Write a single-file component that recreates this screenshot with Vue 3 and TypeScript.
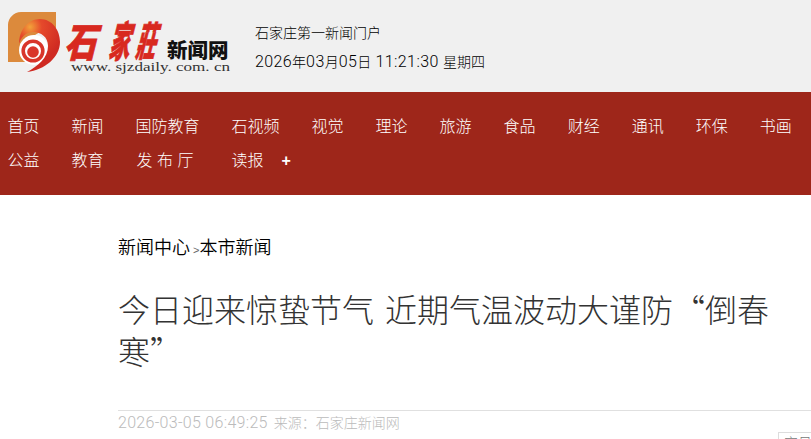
<script setup lang="ts">
const navItems = [
  '首页', '新闻', '国防教育', '石视频', '视觉', '理论', '旅游', '食品', '财经', '通讯', '环保', '书画',
  '公益', '教育', '发 布 厅', '读报',
]
</script>

<template>
  <div class="page">
    <header class="top">
      <svg class="logo" width="232" height="74" viewBox="0 0 232 74">
        <defs>
          <radialGradient id="swirl" gradientUnits="userSpaceOnUse" cx="30" cy="27" r="34">
            <stop offset="0" stop-color="#f2a33a" />
            <stop offset="0.35" stop-color="#e5492b" />
            <stop offset="1" stop-color="#cf2a22" />
          </radialGradient>
        </defs>
        <path d="M21 12 H56 V28 L40 32 L20 44 L28 62 H8 V25 C8 18 14 12 21 12 Z" fill="#dc8a3c" />
        <circle cx="34" cy="50" r="15" fill="#fff" />
        <path d="M19 44 C19 30 28 19 40 19 C52 19 60 30 60 42 C60 57 45 70 27 72 C38 66 48 58 48 46 C48 37 41 32 33 32 C26 32 21 37 19 44 Z" fill="url(#swirl)" />
        <circle cx="33" cy="51" r="9.8" fill="none" stroke="#d9352a" stroke-width="3.6" />
        <circle cx="33" cy="52" r="5.8" fill="#d9352a" />
        <g class="logo-red">
          <text transform="translate(64 57) skewX(-14) scale(0.8 1)" font-size="40">石</text>
          <text transform="translate(108 57) skewX(-14) scale(0.52 1.05)" font-size="40">家</text>
          <text transform="translate(135 56) skewX(-14) scale(0.5 1)" font-size="40">莊</text>
        </g>
        <text class="logo-black" x="167" y="58" font-size="20.5">新闻网</text>
        <text class="logo-url" x="71" y="71" font-size="12" textLength="159" lengthAdjust="spacingAndGlyphs">www. sjzdaily. com. cn</text>
      </svg>
      <div class="slogan">
        <p>石家庄第一新闻门户</p>
        <p><span class="num">2026</span>年<span class="num">03</span>月<span class="num">05</span>日<span class="num"> 11:21:30 </span>星期四</p>
      </div>
    </header>

    <nav class="nav">
      <a v-for="item in navItems" :key="item" :class="{ wide: item === '发 布 厅' }">{{ item }}</a>
      <span class="more">+</span>
    </nav>

    <main class="article">
      <div class="crumb">新闻中心<span class="sep"> &gt;</span>本市新闻</div>
      <h1>今日迎来惊蛰节气 近期气温波动大谨防“倒春寒”</h1>
      <div class="meta"><span class="date">2026-03-05 06:49:25</span> 来源：石家庄新闻网</div>
      <div class="fontsize">字号</div>
    </main>
  </div>
</template>

<style>
html, body {
  margin: 0;
  background: #fff;
  overflow: hidden;
}
</style>

<style scoped>
.page {
  width: 811px;
  height: 439px;
  overflow: hidden;
  font-family: "Liberation Sans", "Noto Sans CJK SC", sans-serif;
  font-weight: 300;
}

.top {
  height: 92px;
  background: #f0f0f0;
  display: flex;
  color: #000;
}

.logo {
  flex: none;
  margin-right: 23px;
}

.logo-red {
  fill: #d8291f;
  stroke: #d8291f;
  stroke-width: 0.8;
  font-family: "Noto Sans CJK SC", sans-serif;
  font-weight: 900;
}

.logo-black {
  fill: #111;
  font-family: "Noto Sans CJK SC", sans-serif;
  font-weight: 900;
}

.logo-url {
  fill: #333;
  font-family: "Liberation Serif", serif;
}

.slogan {
  padding-top: 19px;
  font-size: 14px;
  line-height: 29px;
}

.slogan p {
  margin: 0;
}

.num {
  font-family: Roboto, sans-serif;
  font-size: 16px;
  line-height: 0;
  letter-spacing: 0.4px;
}

.nav {
  height: 103px;
  box-sizing: border-box;
  background: #9e261a;
  padding: 18px 0 0 7.5px;
  display: flex;
  flex-wrap: wrap;
  align-content: flex-start;
  column-gap: 32px;
  color: #fff;
  font-size: 16px;
  line-height: 34px;
}

.nav .wide {
  width: 64px;
  text-indent: 1px;
  white-space: nowrap;
}

.more {
  margin-left: -14px;
  color: #fff;
  font-weight: 700;
}

.article {
  position: relative;
  padding: 40px 0 0 118px;
}

.crumb {
  font-size: 18px;
  line-height: 26px;
  font-weight: 350;
  color: #000;
}

.sep {
  font-size: 11px;
  color: #666;
}

h1 {
  margin: 24px 0 0;
  width: 660px;
  font-family: "Noto Sans CJK SC", sans-serif;
  font-size: 32px;
  line-height: 42px;
  font-weight: 300;
  color: #333;
  word-spacing: 4px;
}

.meta {
  margin-top: 39px;
  border-top: 1px solid #e0e0e0;
  font-size: 14px;
  line-height: 25px;
  color: #bbb;
}

.date {
  font-family: Roboto, sans-serif;
  font-size: 16px;
  line-height: 0;
  margin-right: 2px;
  letter-spacing: 0.3px;
  color: #bbb;
}

.fontsize {
  position: absolute;
  left: 778px;
  top: 237px;
  box-sizing: border-box;
  width: 40px;
  height: 30px;
  border: 1px solid #ddd;
  padding-left: 5px;
  font-size: 14px;
  line-height: 20px;
  color: #777;
  white-space: nowrap;
}
</style>
